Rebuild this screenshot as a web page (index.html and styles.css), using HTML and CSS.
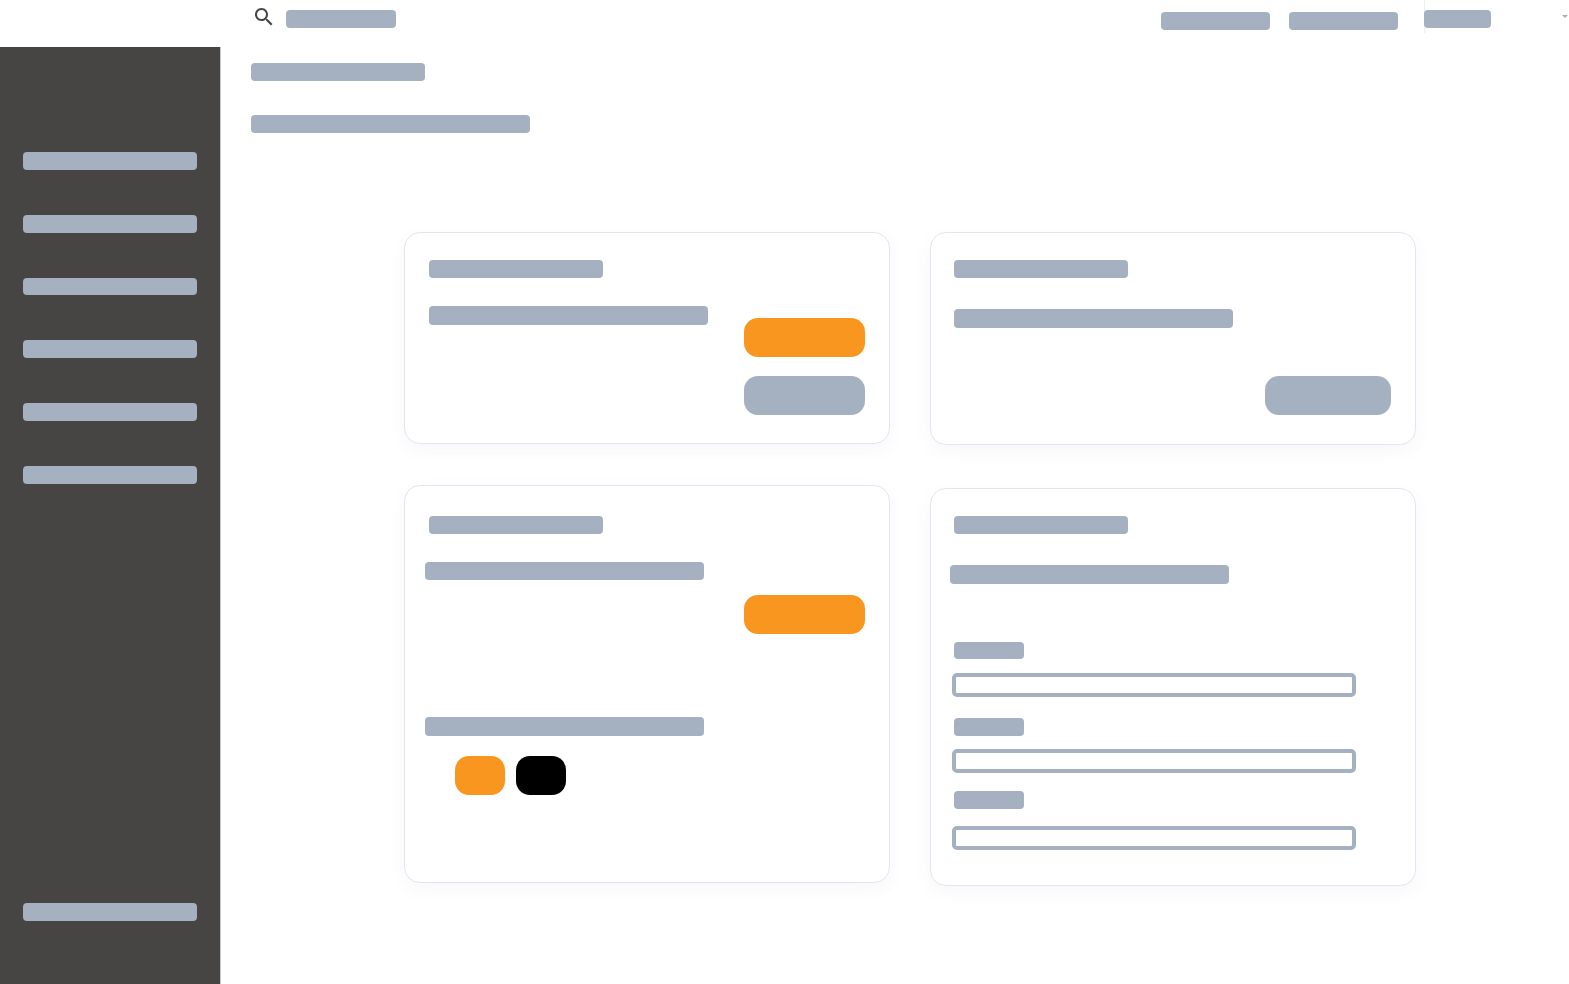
FILE: index.html
```html
<!DOCTYPE html>
<html>

<head>
	<meta charset='utf-8'>
	<title>Settings</title>
	<meta name='viewport' content='width=device-width, initial-scale=1'>
	<link rel="stylesheet" href="styles.css">
</head>

<body>
	<header class="topbar">
		<svg class="search-icon" viewBox="0 0 24 24" width="24" height="24">
			<path d="M15.5 14h-.79l-.28-.27C15.41 12.59 16 11.11 16 9.5 16 5.91 13.09 3 9.5 3S3 5.91 3 9.5 5.91 16 9.5 16c1.61 0 3.09-.59 4.23-1.57l.27.28v.79l5 4.99L20.49 19l-4.99-5zm-6 0C7.01 14 5 11.99 5 9.5S7.01 5 9.5 5 14 7.01 14 9.5 11.99 14 9.5 14z" />
		</svg>
		<div class="bar search-bar"></div>
		<nav class="topnav">
			<div class="bar nav-bar"></div>
			<div class="bar nav-bar"></div>
		</nav>
		<div class="user">
			<div class="bar user-bar"></div>
			<div class="caret"></div>
		</div>
	</header>
	<div class="layout">
		<aside class="sidebar">
			<div class="bar side-bar"></div>
			<div class="bar side-bar"></div>
			<div class="bar side-bar"></div>
			<div class="bar side-bar"></div>
			<div class="bar side-bar"></div>
			<div class="bar side-bar"></div>
			<div class="bar side-bar side-bottom"></div>
		</aside>
		<main>
			<div class="bar page-title"></div>
			<div class="bar page-sub"></div>
			<div class="columns">
				<div class="col col-left">
					<section class="card card-short">
						<div class="bar title"></div>
						<div class="row">
							<div class="bar line line-top"></div>
							<div class="actions">
								<div class="btn orange"></div>
								<div class="btn grey"></div>
							</div>
						</div>
					</section>
					<section class="card card-tall card-theme">
						<div class="bar title"></div>
						<div class="row row-theme">
							<div class="bar line line-out"></div>
							<div class="actions actions-theme">
								<div class="btn orange"></div>
							</div>
						</div>
						<div class="bar line line-out line-swatch"></div>
						<div class="swatches">
							<div class="swatch orange"></div>
							<div class="swatch black"></div>
						</div>
					</section>
				</div>
				<div class="col col-right">
					<section class="card card-short card-plain">
						<div class="bar title"></div>
						<div class="bar line line-plain"></div>
						<div class="btn grey btn-wide"></div>
					</section>
					<section class="card card-tall">
						<div class="bar title"></div>
						<div class="bar line line-out line-form"></div>
						<div class="field field-first">
							<div class="bar label"></div>
							<div class="input"></div>
						</div>
						<div class="field field-second">
							<div class="bar label"></div>
							<div class="input input-tight"></div>
						</div>
						<div class="field field-third">
							<div class="bar label"></div>
							<div class="input input-last"></div>
						</div>
					</section>
				</div>
			</div>
		</main>
	</div>
</body>

</html>
```

FILE: styles.css
```css
:root {
	--bar: #a5b0c0;
	--orange: #f99620;
	--dark: #474543;
	--card-border: #e3e6f1;
}

* {
	box-sizing: border-box;
}

html,
body {
	height: 100%;
}

body {
	display: flex;
	flex-direction: column;
	margin: 0;
	background: #fff;
	font-family: "Liberation Sans", Arial, sans-serif;
	overflow: hidden;
}

.bar {
	height: 18px;
	border-radius: 4px;
	background: var(--bar);
}

/* top bar */
.topbar {
	display: flex;
	flex: none;
	align-items: flex-start;
	height: 47px;
	padding: 0 0 0 252px;
}

.search-icon {
	flex: none;
	margin-top: 5px;
	fill: #444;
}

.search-bar {
	width: 110px;
	margin: 10px 0 0 10px;
}

.topnav {
	display: flex;
	gap: 19px;
	margin: 12px 0 0 auto;
}

.nav-bar {
	width: 109px;
}

.user {
	display: flex;
	width: 145px;
	height: 33px;
	margin-left: 26px;
	padding-right: 1px;
	border-left: 1px solid #eceef4;
}

.user-bar {
	width: 66.5px;
	margin: 10px 0 0 -1px;
}

.caret {
	width: 0;
	height: 0;
	margin: 15px 0 0 auto;
	border-top: 3px solid var(--bar);
	border-left: 3px solid transparent;
	border-right: 3px solid transparent;
}

/* page */
.layout {
	display: flex;
	flex: 1;
	min-height: 0;
}

.sidebar {
	display: flex;
	flex: none;
	flex-direction: column;
	gap: 45px;
	width: 221px;
	padding: 105px 23px 63px;
	background: var(--dark);
	border-right: 1px solid #c3cad6;
}

.side-bar {
	flex: none;
	width: 174px;
	height: 17.8px;
}

.side-bottom {
	margin-top: auto;
}

main {
	flex: 1;
	padding: 16px 0 0 30px;
}

.page-title {
	width: 174px;
	height: 17.5px;
}

.page-sub {
	width: 279px;
	margin-top: 34.5px;
}

.columns {
	display: flex;
	gap: 40px;
	margin: 99px 0 0 153px;
}

.col {
	display: flex;
	flex-direction: column;
	width: 486px;
}

.col-left {
	gap: 41px;
}

.col-right {
	gap: 43.5px;
}

/* cards */
.card {
	padding: 27px 24px 0;
	background: #fff;
	border: 1px solid var(--card-border);
	border-radius: 16px;
	box-shadow: 0 6px 18px rgba(90, 100, 150, 0.05);
}

.col-right .card {
	padding-left: 23px;
}

.card-short {
	height: 212px;
}

.card-plain {
	height: 212.5px;
}

.card-tall {
	height: 398px;
}

.card-theme {
	padding-top: 30px;
}

.title {
	width: 174px;
	height: 17.5px;
}

.line {
	flex: none;
	width: 279px;
	height: 18.5px;
}

.line-top {
	margin-top: 28.5px;
}

.line-out {
	margin-left: -4px;
}

.row {
	display: flex;
	justify-content: space-between;
}

.row-theme .line {
	margin-top: 28px;
}

.actions {
	display: flex;
	flex-direction: column;
	gap: 19px;
	margin-top: 40.5px;
}

.actions-theme {
	margin-top: 61px;
}

.btn {
	width: 121px;
	height: 39px;
	border-radius: 14px;
}

.btn-wide {
	width: 125.5px;
	margin: 48.5px 0.5px 0 auto;
}

.orange {
	background: var(--orange);
}

.grey {
	background: var(--bar);
}

.black {
	background: #000;
}

.line-plain {
	margin-top: 31.5px;
}

.line-swatch {
	height: 19px;
	margin-top: 83px;
}

.swatches {
	display: flex;
	gap: 11px;
	margin: 20.5px 0 0 26px;
}

.swatch {
	width: 50px;
	height: 39px;
	border-radius: 14px;
}

/* form */
.line-form {
	margin-top: 31.5px;
}

.field-first {
	margin-top: 58px;
}

.field-second {
	margin-top: 21px;
}

.field-third {
	margin-top: 18px;
}

.label {
	width: 70px;
	height: 17.5px;
}

.input {
	width: 404px;
	height: 24px;
	margin: 14px 0 0 -2px;
	border: 4px solid var(--bar);
	border-radius: 5px;
	background: #fff;
}

.input-tight {
	margin-top: 13.5px;
}

.input-last {
	margin-top: 17px;
}
```
